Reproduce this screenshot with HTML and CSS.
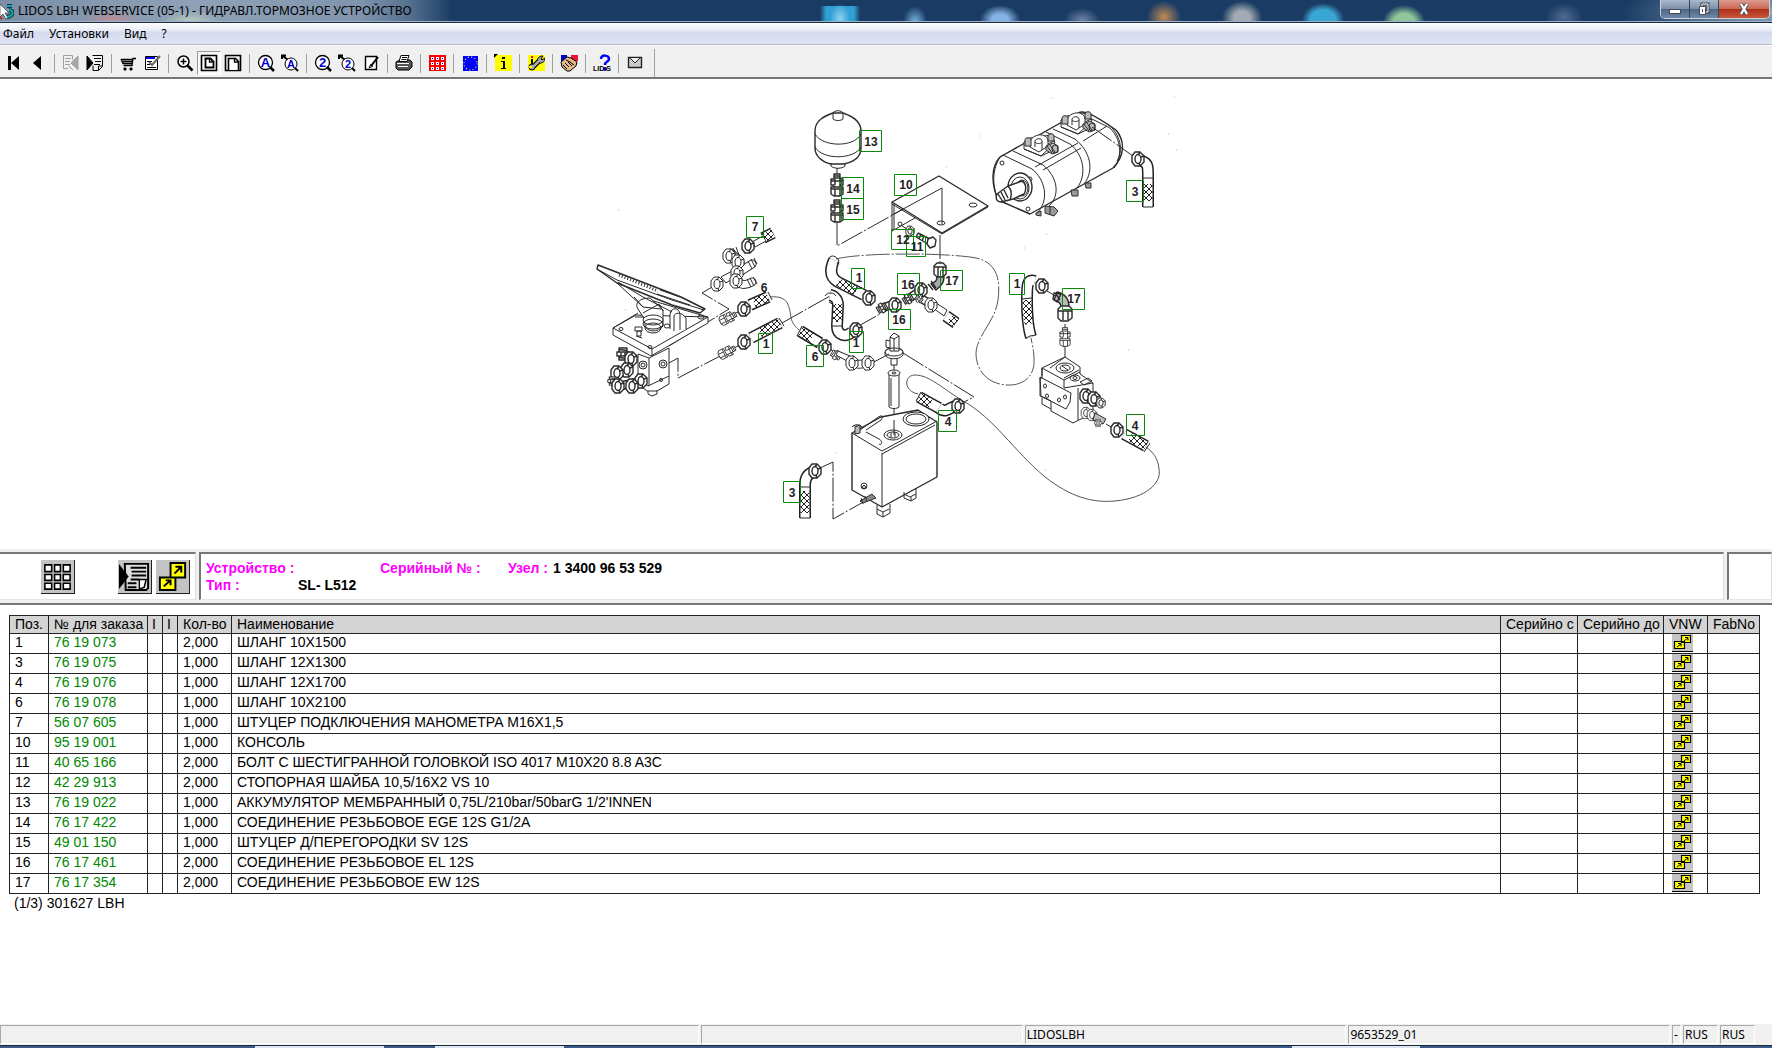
FILE: index.html
```html
<!DOCTYPE html>
<html lang="ru">
<head>
<meta charset="utf-8">
<title>LIDOS LBH WEBSERVICE</title>
<link rel="stylesheet" href="styles.css">
</head>
<body>
<header class="titlebar">
  <svg class="app-icon" width="14" height="20" viewBox="0 0 14 20" aria-hidden="true"><path d="M0 3l9 9-4 0 3 5-2 1-3-5-3 3z" fill="#fff" stroke="#222" stroke-width=".6"/><path d="M7 5h5M9 9c5 0 5 6-2 7" stroke="#083a40" stroke-width="4" fill="none"/><path d="M7 5h5M9 9c5 0 5 6-2 7" stroke="#17a9a9" stroke-width="2" fill="none"/><path d="M0 16l2 2" stroke="#c22" stroke-width="2"/></svg>
  <h1 class="title">LIDOS LBH WEBSERVICE (05-1) - ГИДРАВЛ.ТОРМОЗНОЕ УСТРОЙСТВО</h1>
  <div class="window-buttons">
    <button class="win" aria-label="Свернуть"><svg width="14" height="14"><rect x="1.500" y="7.500" width="11" height="4" fill="#fff" stroke="#444a5a"/></svg></button>
    <button class="win" aria-label="Восстановить"><svg width="14" height="14"><path d="M5 2h6v8H5z" fill="none" stroke="#444a5a" stroke-width="3"/><path d="M5 2h6v8H5z" fill="none" stroke="#fff"/><path d="M2.500 4.500h6v8h-6z" fill="#fff" stroke="#444a5a"/><path d="M5 7h1v3H5z" fill="#444a5a"/></svg></button>
    <button class="win win-close" aria-label="Закрыть"><svg width="14" height="14"><path d="M4 2l6 10M10 2L4 12" stroke="#444a5a" stroke-width="4"/><path d="M4 2l6 10M10 2L4 12" stroke="#fff" stroke-width="2.400"/></svg></button>
  </div>
</header>
<nav class="menubar">
  <button>Файл</button><button>Установки</button><button>Вид</button><button>?</button>
</nav>
<div class="toolbar" role="toolbar">
  <button aria-label="Первая"><svg viewBox="0 0 18 18"><path d="M3 2h3v14H3zM14 2v14L6 9z"/></svg></button>
  <button aria-label="Назад"><svg viewBox="0 0 18 18"><path d="M12 2v14L4 9z"/></svg></button>
  <i class="sep"></i>
  <button aria-label="Предыдущий узел" disabled><svg viewBox="0 0 18 18" fill="none" stroke="#a0a0a0"><path d="M1.500 1.500h9v4M1.500 1.500v13h5M3 4.500h6M3 7.500h5M3 10.500h5M7 12l4 4"/><path d="M16 2v14L9 9z" fill="#a8a8a8"/></svg></button>
  <button aria-label="Следующий узел"><svg viewBox="0 0 18 18" fill="none" stroke="#000"><path d="M6.500 1.500h10v11l-4 4H7v-5"/><path d="M8 4.500h7M9 7.500h6M8 10.500h6M12.500 16v-4h4" /><path d="M1 2v14l6-7z" fill="#000"/></svg></button>
  <i class="sep"></i>
  <button aria-label="Корзина"><svg viewBox="0 0 18 18" fill="none" stroke="#000"><path d="M17 4.500h-3l-1 7H4.500M2 5.500h11.500M2 5l2 4.500h9M4 7.500h9" stroke-width="1.300"/><path d="M5 14h2v2H5zM11 14h2v2h-2z" fill="#000"/></svg></button>
  <button aria-label="Заказ"><svg viewBox="0 0 18 18" fill="none" stroke="#000"><path d="M2.500 2.500h12v13h-12z" fill="#fff"/><path d="M3 4h9" stroke="#00f" stroke-width="2"/><path d="M4 7.500h5M4 10.500h3M4 13.500h9"/><path d="M6 8l3 3 8-9" stroke="#666" stroke-width="2"/></svg></button>
  <i class="sep"></i>
  <button aria-label="Увеличить"><svg viewBox="0 0 18 18" fill="none" stroke="#000"><circle cx="7.500" cy="7.500" r="5.500" fill="#fff" stroke-width="1.500"/><path d="M4.500 7.500h6M7.500 4.500v6" stroke-width="1.500"/><path d="M11.500 11.500l5 5" stroke-width="2.500"/></svg></button>
  <button class="pressed" aria-label="Вся страница"><svg viewBox="0 0 18 18" fill="none" stroke="#000"><path d="M1.500 1.500h15v15h-15z" stroke-width="1.600"/><path d="M5.500 4.500h5l3 3v6h-8z" fill="#fff" stroke-width="1.800"/><path d="M9.500 4v4h4" stroke-width="1.300"/></svg></button>
  <button aria-label="По ширине"><svg viewBox="0 0 18 18" fill="none" stroke="#000"><path d="M1.500 1.500h15v15h-15z" stroke-width="1.600"/><path d="M4.500 16V4.500h7l3 3V16" fill="#fff" stroke-width="1.600"/><path d="M10.500 4v4h4" stroke-width="1.300"/></svg></button>
  <i class="sep"></i>
  <button aria-label="Поиск текста"><svg viewBox="0 0 18 18"><circle cx="8.500" cy="8.500" r="7" fill="#fff" stroke="#000" stroke-width="1.300"/><path d="M13 13l4 4" stroke="#000" stroke-width="2.500"/><text class="glyph" x="8.500" y="13" font-size="13">A</text></svg></button>
  <button aria-label="Поиск текста в узле"><svg viewBox="0 0 18 18"><path d="M1 5V1.500h4M2 2l5 4" fill="none" stroke="#000" stroke-width="2"/><circle cx="10" cy="10" r="6" fill="#fff" stroke="#000"/><path d="M14 14l3 3" stroke="#000" stroke-width="2"/><text class="glyph" x="10" y="14" font-size="11">A</text></svg></button>
  <i class="sep"></i>
  <button aria-label="Поиск номера"><svg viewBox="0 0 18 18"><circle cx="8.500" cy="8.500" r="7" fill="#fff" stroke="#000" stroke-width="1.300"/><path d="M13 13l4 4" stroke="#000" stroke-width="2.500"/><text class="glyph" x="8.500" y="13" font-size="13">2</text></svg></button>
  <button aria-label="Поиск номера в узле"><svg viewBox="0 0 18 18"><path d="M1 5V1.500h4M2 2l5 4" fill="none" stroke="#000" stroke-width="2"/><circle cx="10" cy="10" r="6" fill="#fff" stroke="#000"/><path d="M14 14l3 3" stroke="#000" stroke-width="2"/><text class="glyph" x="10" y="14" font-size="11">2</text></svg></button>
  <button aria-label="Заметка"><svg viewBox="0 0 18 18" fill="none" stroke="#000"><path d="M3.500 2.500h11v13h-11z" fill="#fff" stroke-width="1.400"/><path d="M16 3l-7 9" stroke-width="2"/><path d="M9 10l-2 4 4-2"/></svg></button>
  <i class="sep"></i>
  <button aria-label="Печать"><svg viewBox="0 0 18 18" fill="none" stroke="#000"><path d="M1 8l4-2h10l2 2v5l-3 3H3l-2-2z" fill="#555"/><path d="M6 1.500h8l-2 6H4z" fill="#fff"/><path d="M7 3.500h5M6.500 5.500h5"/><path d="M2 9.500h12M3 12.500h10" stroke="#fff"/></svg></button>
  <i class="sep"></i>
  <button aria-label="Сетка"><svg viewBox="0 0 18 18"><path d="M1 1h17v16H1z" fill="#f00"/><path d="M3 3h3v3H3zM8 3h3v3H8zM13 3h3v3h-3zM3 8h3v3H3zM8 8h3v3H8zM13 8h3v3h-3zM3 13h3v3H3zM8 13h3v3H8zM13 13h3v3h-3z" fill="#fff"/><path d="M4 4h1v1H4zM9 4h1v1H9zM14 4h1v1h-1zM4 9h1v1H4zM9 9h1v1H9zM14 9h1v1h-1zM4 14h1v1H4zM9 14h1v1H9zM14 14h1v1h-1z" fill="#00f"/></svg></button>
  <i class="sep"></i>
  <button aria-label="Европа"><svg viewBox="0 0 18 18"><path d="M2 2h15v15H2z" fill="#00f"/><circle cx="9.500" cy="9.500" r="6.500" fill="none" stroke="#dddb55" stroke-width="1.300" stroke-dasharray="1 2.400"/></svg></button>
  <i class="sep"></i>
  <button aria-label="Информация"><svg viewBox="0 0 18 18"><path d="M1 1h17v16H1z" fill="#ff0"/><path d="M0 0h4L0 4zM8 3h3v2H8zM7 7h4v7h1v1H7v-1h2V8H7z"/></svg></button>
  <i class="sep"></i>
  <button aria-label="Сервис"><svg viewBox="0 0 18 18"><path d="M1 1h17v16H1z" fill="#ff0"/><path d="M4 2h2v2H4z" fill="#f00"/><path d="M4 5h2v6H4z"/><path d="M6 13l7-7" stroke="#000" stroke-width="5"/><circle cx="5" cy="13" r="3" fill="#aaa" stroke="#000"/><path d="M11 7c-1-4 2-5 5-5l-2 3 1 1 3-2c0 4-3 5-5 5z" fill="#aaa" stroke="#000"/><path d="M6 13l7-7" stroke="#aaa" stroke-width="2.500"/><path d="M2 13h3" stroke="#ff0" stroke-width="2"/></svg></button>
  <i class="sep"></i>
  <button aria-label="Партнёры"><svg viewBox="0 0 18 18"><path d="M1 1h6v6H1z" fill="#00c"/><path d="M11 1h7v6h-7z" fill="#f01030"/><path d="M1 8l6-5 4 1 6 4-1 4-6 5H7l-5-4z" fill="#e3b98a" stroke="#000"/><path d="M6 6l4 2 4 3M5 9l4 4M8 8l4 4M3 11l4 4" stroke="#000" fill="none"/></svg></button>
  <i class="sep"></i>
  <button aria-label="О программе"><svg viewBox="0 0 18 18"><text x="0" y="17" font-size="7" font-weight="700" font-family="Liberation Sans, sans-serif">LID S</text><path d="M8 5c0-5 8-4 8 0 0 3-4 2-4 6" fill="none" stroke="#00f" stroke-width="2.500"/><circle cx="12" cy="15" r="2" fill="#008"/></svg></button>
  <i class="sep"></i>
  <button aria-label="Почта"><svg viewBox="0 0 18 18"><path d="M2.500 3.500h13v10h-13z" fill="#ccc" stroke="#222" stroke-width="1.400"/><path d="M4 4l5 5 5-5" fill="#eee" stroke="#222"/></svg></button>
  <i class="sep sep-end"></i>
</div>

<main class="workspace">
  <section class="drawing" aria-label="Чертёж узла">
    <svg class="scheme" width="600" height="460" viewBox="586 85 600 460">
      <defs>
        <pattern id="braid" width="6" height="6" patternUnits="userSpaceOnUse"><path d="M0 0l6 6M6 0L0 6" stroke="#222" stroke-width="1"/></pattern>
        <g id="nut"><path d="M-6-3l3-4h5l4 4v6l-4 4h-5l-3-4z" fill="#fff"/><ellipse rx="3" ry="4.500"/><path d="M2-7l-2 3M6-3l-3 1M2 7l-1-3"/></g>
        <g id="plug"><path d="M-4-6h8v12h-8z" fill="#fff"/><path d="M-6-2h12v4h-12z" fill="#fff"/><path d="M-4-4.500l8 1M-4 3.500l8 1M-2-2v4M2-2v4"/></g>
        <g id="coupling"><path d="M-3-11h6v5h3v6h-3v2h3v7l-3 2h-6l-3-2V2h3V0h-3v-6h3z" fill="#fff"/><path d="M-3-9h6M-3-7h6M-6-4H6M-2-6V0M3-6V0M-6 4H6M-2 4v7M3 4v7M-3 2h6"/></g>
        <g id="port"><path d="M-14 2v-7l6-4 22-3 3 8L3 9z" fill="#fff"/><path d="M-12-5l12 7M0 2l16-8M-14 2L3 9l17-8"/><path d="M-8-4c0-8 15-12 18-3v6L1 5l-9-5z" fill="#fff"/><path d="M-3 0v-6c1-3 7-3 7 0v9M-3-5c1 2 6 2 7 0"/><path d="M-13-7c0-3 6-3 6 0v6h-6zM10-11c0-3 6-3 6 0v5h-6z" fill="#bbb"/><path d="M8-1l7-3 5 3v6l-6 2-6-4z" fill="#bbb"/><ellipse cx="17" cy="2" rx="3" ry="4"/><path d="M9-1l5 7M12-2l5 7"/></g>
      </defs>
      <g class="ink">
        <!-- routing lines -->
        <path class="axis" d="M837 221v25l104-58v36M940 235v28M837 168v6M712 287l-10 6 27 16-60 37M669 363l9-5v20l44-23M782 323l48-27M855 328l25-14M872 363l17-9M903 353l71 44-14 7M1047 291l10 6M1065 324v4M1065 346v20M894 365v8M894 408v28M820 468l13-6v57l34-19M830 349l7 5M829 302l7 4M734 314l8-4M734 348l8-4"/>
        <path class="axis thin" d="M836 259c28-7 115-6 140-1 24 5 24 27 22 42-3 22-21 35-22 53 0 18 12 31 31 32 20 1 28-13 27-25 0-10-2-16-3-22"/>
        <path class="thin" d="M770 297c19-2 19 10 21 20 1 7 5 10 8 13M918 394c-15-3-14-19-3-19 14 0 27 13 48 26 30 16 51 50 82 76 26 20 47 26 70 24 31-3 47-18 44-32-1-11-6-17-13-22"/>
        <!-- brake pedal -->
        <path fill="#fff" d="M613 328l23-13 72 2v6l-57 33-38-21z"/><path d="M613 328l39 21 56-32M652 349v7M638 313l-25 15M650 300l58 17"/>
        <path d="M638 309c-4-6 2-11 12-11l13 12v16c-5 7-16 6-18 0v-6z" fill="#fff"/>
        <ellipse cx="653" cy="320" rx="10" ry="5" fill="#fff"/><ellipse cx="653" cy="324" rx="10" ry="5"/><ellipse cx="653" cy="328" rx="8" ry="5"/><path d="M643 313l16-9 4 7M635 317h9"/>
        <path d="M670 329v-15c1-7 9-7 10 0v16M674 331v-15c1-4 8-4 12 2v12" fill="#fff"/>
        <path class="bold" d="M598 265l83 32 24 12-5 4-28-8-55-22-20-14z" fill="#fff"/><path d="M597 269l20 11 55 20 32 10M617 283l26 24 18 2M618 282l25 15 29 15M634 297l9 10M660 290l20 7M657 294l33 11"/>
        <path d="M619 275l39 16" stroke-width="3" stroke-dasharray="1 2"/>
        <ellipse cx="621" cy="329" rx="2" ry="1.500"/><ellipse cx="701" cy="317" rx="3" ry="2"/><ellipse cx="650" cy="347" rx="2" ry="1.500"/><ellipse cx="667" cy="326" rx="3" ry="2"/>
        <path d="M635 327h7v4h-7zM637 331h4v5h-4zM636 336l6 2"/>
        <path d="M638 354l11 4 20-10v36l-12 7h-10l-9-7z" fill="#fff"/><path d="M649 358v28M638 379l10 7 21-10M648 391v3l4 2 5-2v-4"/>
        <circle cx="643" cy="365" r="4"/><circle cx="643" cy="365" r="2"/><circle cx="663" cy="364" r="4"/><circle cx="663" cy="364" r="2"/><circle cx="661" cy="380" r="1.500"/>
        <g class="bold"><path d="M616 374l12-5M619 386l20-4" stroke-width="9"/><path d="M616 374l12-5M619 386l20-4" stroke="#fff" stroke-width="6"/><use href="#plug" x="623" y="354"/><use href="#nut" x="631" y="359"/><use href="#nut" x="627" y="370"/><use href="#nut" x="617" y="373"/><use href="#plug" transform="translate(612 381) scale(.7)"/><use href="#nut" x="618" y="386"/><use href="#nut" x="641" y="381"/><use href="#nut" x="632" y="386"/></g>
        <!-- tee fittings above pedal -->
        <use href="#nut" x="717" y="284"/><path d="M721 277l13-7 4 5-12 8z" fill="#fff"/>
        <g stroke-linecap="round"><path d="M731 253l9 9-3 19M738 273l14-9M737 281c4 5 10 4 15 1" stroke-width="9"/><path d="M731 253l9 9-3 19M738 273l14-9M737 281c4 5 10 4 15 1" stroke="#fff" stroke-width="7"/></g>
        <path d="M748 261l4 8M751 259l4 8M754 258l3 6M747 279l4 8M750 278l4 8M753 277l4 7M733 248l3 8M736 247l3 8"/>
        <use href="#nut" x="729" y="256"/><use href="#nut" x="738" y="262"/><use href="#nut" x="737" y="273"/><use href="#nut" x="736" y="281"/>
        <use href="#coupling" transform="translate(728 318) rotate(64) scale(.8)"/><use href="#coupling" transform="translate(727 352) rotate(64) scale(.8)"/>
        <!-- hoses: outline, filling and braid over one path -->
        <g class="hose">
          <path d="M750 305l18-8M751 338l29-15M800 331l20 12M763 238l10-5M1148 175v32M1124 434l22 12M919 397l20 11M805 485v33M946 316l10 7"/>
          <path class="fill" d="M750 305l18-8M751 338l29-15M800 331l20 12M763 238l10-5M1148 175v32M1124 434l22 12M919 397l20 11M805 485v33M946 316l10 7"/>
          <path class="braid" d="M754 303l14-6M760 333l20-10M800 331l12 7M763 238l10-5M1148 184v17M1130 437l16 9M919 397l12 7M805 491v22M950 318l6 5"/>
          <path d="M834 260c-5 11-3 18 4 22l26 13M830 295c5 1 8 5 8 10l-1 21c0 9 8 12 15 6M1035 281c-8-2-8 4-8 18 0 17 1 29 4 38M1142 161c6 2 6 6 6 14M813 472c-6 2-8 7-8 13M939 408c8 7 12-3 18-2"/>
          <path class="fill" d="M834 260c-5 11-3 18 4 22l26 13M830 295c5 1 8 5 8 10l-1 21c0 9 8 12 15 6M1035 281c-8-2-8 4-8 18 0 17 1 29 4 38M1142 161c6 2 6 6 6 14M813 472c-6 2-8 7-8 13M939 408c8 7 12-3 18-2"/>
          <path class="braid" d="M838 282l18 9M838 304l-1 18M1027 300c0 10 1 18 2 24"/>
        </g>
        <path d="M829 258c2-3 7-3 10 3l-2 3M825 296c2-4 9-4 11 0M832 326h11M1022 299l10-1M1026 338l4-2 6-1M1143 178h11M1143 207h10M800 487h11M800 518h10M768 292l4 8M779 318l5 8M797 336l5-10M1144 452l6-9M916 401l5-9M857 287l-5 9"/>
        <path d="M752 242l11-6 3 5-11 6zM936 303l11 7-3 6-11-8z" fill="#fff"/>
        <g class="bold"><use href="#nut" x="744" y="309"/><use href="#nut" x="744" y="342"/><use href="#nut" x="748" y="246"/><use href="#nut" x="825" y="347"/><use href="#nut" x="869" y="298"/><use href="#nut" x="856" y="330"/><use href="#nut" x="1042" y="286"/><use href="#nut" x="1138" y="159"/><use href="#nut" x="1117" y="430"/><use href="#nut" x="958" y="406"/><use href="#nut" x="815" y="471"/></g>
        <!-- screw joints of the centre group -->
        <use href="#plug" transform="translate(836 355) rotate(-60) scale(.8)"/><path d="M838 351l12 5-3 5-11-6z" fill="#fff"/><path d="M852 358c5 3 10 3 15 0v8c-5 3-10 3-15 0z" fill="#fff"/><use href="#nut" x="852" y="363"/><use href="#nut" x="868" y="363"/>
        <g class="bold"><path d="M882 308l12-4M908 299l12-8M919 297l8 5" stroke-width="9"/><path d="M882 308l12-4M908 299l12-8M919 297l8 5" stroke="#fff" stroke-width="6"/><use href="#plug" transform="translate(882 308) rotate(60) scale(.8)"/><use href="#nut" x="895" y="305"/><use href="#plug" transform="translate(908 299) rotate(60) scale(.8)"/><use href="#nut" x="921" y="290"/><use href="#plug" transform="translate(919 299) rotate(-50) scale(.6)"/></g><use href="#nut" x="931" y="305"/>
        <g class="bold"><path d="M934 266l3-3h6l3 3v8l-3 3h-6l-3-3z" fill="#fff"/><path d="M934 267h12M938 267v9M943 267v9"/><path d="M937 277h7c0 7-4 9-8 13l-5-6c4-2 6-3 6-7z" fill="#aaa"/><path d="M931 281l5 7M928 284l5 6"/></g>
        <!-- accumulator -->
        <g class="bold"><path d="M815 131c0-11 10-15 18-18h10c9 3 18 8 18 18v17c0 9-8 14-17 16h-13c-9-2-16-8-16-16z" fill="#fff"/></g><path d="M833 119v-6c1-3 9-3 10 0v6c-2 2-8 2-10 0M815 134c7 13 39 14 46 0M815 147c7 13 39 13 46 0M831 163v3c3 3 11 3 14 0v-3"/>
        <g class="bold"><use href="#coupling" x="837" y="185"/><use href="#coupling" x="837" y="211"/></g>
        <!-- bracket with bolt -->
        <path d="M892 202v29l23-13M894 204v25"/><path class="bold" d="M892 202l47-26 49 30-46 27z" fill="#fff"/><path d="M892 204l50 30 46-27M942 224v-36l-50 27"/><ellipse cx="973" cy="205" rx="4" ry="2"/><ellipse cx="941" cy="223" rx="4" ry="2"/><ellipse cx="900" cy="224" rx="2" ry="2"/><path d="M902 226l5 3"/>
        <g class="bold"><use href="#nut" transform="translate(910 231) scale(.7)"/><path d="M918 233l12 6M916 237l12 7M918 233l-2 4M921 234l-2 5M924 236l-2 5"/><path d="M928 239l5-2 3 3-1 6-5 2-3-4z" fill="#fff"/></g>
        <!-- tandem pump -->
        <g class="bold"><path d="M1000 157l78-44c5-3 12-1 38 17 10 12 8 27-3 38l-83 46-32-14c-7-17-7-33 2-43z" fill="#fff"/></g>
        <path d="M1003 155l29 14c13 10 18 31 5 44M1013 151l30 14c14 11 18 30 6 41M1046 132l24 12c14 11 17 31 7 44M1053 129l22 10c15 12 20 31 9 45M1090 118l20 10c11 11 13 28 4 40M1108 124c12 10 16 26 9 37M1035 167l43-24M1043 170l38-22M1083 141l24-15M1000 157c-9 15-7 30-2 43M1003 155l-3 2"/>
        <use href="#port" x="1038" y="147"/><use href="#port" x="1075" y="125"/>
        <path class="axis" d="M1092 127l41 29"/>
        <circle cx="1002" cy="163" r="2"/><circle cx="1030" cy="179" r="2"/><circle cx="1028" cy="209" r="2"/>
        <g class="bold"><ellipse cx="1020" cy="187" rx="12" ry="14" fill="#fff"/></g><ellipse cx="1020" cy="188" rx="9" ry="11"/><ellipse cx="1022" cy="188" rx="6" ry="8"/>
        <g class="bold"><path d="M1022 181l-14 5-11 8c-2 5 0 8 4 8l12-3 11-5c3-5 2-11-2-13z" fill="#fff"/><path d="M1008 186c4 4 4 9 2 14M998 194l5 8M1001 192l4 8M1004 190l4 8"/></g>
        <path d="M1036 213l5-2v5l-5-1zM1045 206l9 1 4 4-4 5-9-3zM1050 207v7M1071 190h7v6h-6zM1085 183h6v5h-5z" fill="#999"/>
        <!-- elbow and nipple over the valve block -->
        <g class="bold"><path d="M1057 292c9 2 12 8 12 15h-8c0-4-3-6-7-7z" fill="#bbb"/><path d="M1054 293l-1 6 4 3 4-8zM1056 294l4 6"/><path d="M1058 309l3-3h8l3 3v9l-4 3h-7l-3-3z" fill="#fff"/><path d="M1058 311h14M1063 311v9M1068 311v9"/></g>
        <use href="#coupling" transform="translate(1065 337) scale(.85)"/>
        <!-- valve block -->
        <path d="M1042 368l23-11 15 10v7l13 9v30l-20 10-22-12v-10l-11-5v-18h2z" fill="#fff"/><path d="M1042 368l22 12 16-8M1064 380v8l29-5M1064 378l15-8M1078 388v32M1042 368v8M1040 377l31 16-1 9-4 7-25-13zM1042 398v6l9 5M1065 357l-15 11"/>
        <ellipse cx="1065" cy="368" rx="9" ry="5"/><ellipse cx="1065" cy="368" rx="5" ry="3"/><path d="M1062 366l6 4"/><ellipse cx="1075" cy="378" rx="5" ry="3"/><ellipse cx="1075" cy="378" rx="2" ry="1.500"/><path d="M1080 382l8-4 4 3-8 4z"/>
        <ellipse cx="1045" cy="386" rx="1.500" ry="2"/><ellipse cx="1059" cy="400" rx="1.500" ry="2"/><ellipse cx="1047" cy="396" rx="1.500" ry="2"/><ellipse cx="1065" cy="397" rx="1.500" ry="2"/>
        <g class="bold"><use href="#nut" x="1086" y="396"/><use href="#nut" x="1094" y="399"/><use href="#nut" transform="translate(1101 403) scale(.7)"/></g><use href="#nut" transform="translate(1086 413) scale(.8)"/><use href="#nut" transform="translate(1092 415) scale(.8)"/><path d="M1095 413l11 6-3 5-10-4z" fill="#bbb"/><use href="#plug" transform="translate(1098 423) scale(.6)"/><path d="M1106 424l5 3"/>
        <!-- filter -->
        <path d="M890 337l4-4 5 3v15h-9z" fill="#fff"/><path d="M894 339v12M890 337l4 2 5-3M890 341l-4-1v7l4 1"/><path d="M885 351l4-3M899 348l4 3"/><ellipse cx="894" cy="352" rx="9" ry="4"/><path d="M885 352v3c3 5 15 5 18 0v-3M891 358v7h6v-7"/>
        <path d="M889 374v33c2 2 8 2 10 0v-33" fill="#fff"/><ellipse cx="894" cy="373" rx="6" ry="3" fill="#fff"/><ellipse cx="894" cy="373" rx="2" ry="1"/><path d="M891 378v28"/>
        <!-- tank -->
        <path class="bold" d="M852 433l29-16 37-7 19 12v55l-55 30-30-17z" fill="#fff"/><path d="M852 433l30 18 55-30M882 453v54M882 454l53-29M860 430l17-12c5-4 7-2 4 2l-15 10M866 432l13 7c4 2 3 7 0 5"/>
        <path d="M855 427l5-2v8l-5 1zM852 427c2-3 8-3 10 0" fill="#bbb"/>
        <ellipse cx="893" cy="435" rx="9" ry="5" fill="#fff"/><ellipse cx="893" cy="435" rx="6" ry="3"/><path d="M891 433v5M895 432v5M894 420v15"/><ellipse cx="916" cy="419" rx="13" ry="7" fill="#fff"/><ellipse cx="916" cy="419" rx="10" ry="5"/>
        <circle cx="864" cy="486" r="3"/><circle cx="864" cy="487" r="1.500"/>
        <path d="M860 501l12-7 4 4-13 5zM863 504l-2-6M867 501l-2-5" fill="#888"/><path d="M877 505v9l6 3 7-4v-9M877 509l6 3 6-3M883 512v5M904 492v6l7 3 5-3v-10M904 494l6 3 6-3M911 497v4"/>
      </g>
      <g class="specks"><path d="M618 210h1M625 310h1M1052 98h1M1174 97h1M1168 134h1M1046 234h1M1024 248h1M946 167h1M979 136h1M1045 470h1M836 453h1M1128 350h1M1176 150h1"/></g>
      <g class="tags">
        <path d="M859.500 130.500h22v21h-22zM841.500 177.500h22v21h-22zM841.500 198.500h22v21h-22zM894.500 174.500h22v21h-22zM891.500 229.500h22v20h-22zM906.500 236.500h19v20h-19zM851.500 268.500h13v20h-13zM897.500 273.500h22v21h-22zM940.500 270.500h22v20h-22zM1009.500 273.500h15v21h-15zM1062.500 288.500h22v21h-22zM1126.500 180.500h17v21h-17zM746.500 216.500h17v21h-17zM758.500 333.500h14v20h-14zM806.500 345.500h17v21h-17zM849.500 331.500h14v21h-14zM888.500 309.500h22v20h-22zM938.500 410.500h18v21h-18zM783.500 481.500h17v21h-17zM1126.500 414.500h18v21h-18z"/>
        <text x="871" y="146">13</text><text x="853" y="193">14</text><text x="853" y="214">15</text><text x="906" y="189">10</text><text x="903" y="244">12</text><text x="917" y="251">11</text><text x="859" y="282">1</text><text x="908" y="289">16</text><text x="952" y="285">17</text><text x="1017" y="288">1</text><text x="1074" y="303">17</text><text x="1135" y="196">3</text><text x="755" y="231">7</text><text x="766" y="348">1</text><text x="815" y="361">6</text><text x="856" y="347">1</text><text x="899" y="324">16</text><text x="948" y="426">4</text><text x="792" y="497">3</text><text x="1135" y="430">4</text><text x="764" y="292">6</text>
      </g>
    </svg>
  </section>

  <section class="infobar">
    <div class="pane pane-tools">
      <button class="tile" aria-label="Сетка узлов"><svg width="33" height="33" viewBox="0 0 34 34"><g fill="#fff" stroke="#000" stroke-width="1.600"><path d="M4 5h7v7H4zM14 5h6v7h-6zM23 5h7v7h-7zM4 15h7v6H4zM14 15h6v6h-6zM23 15h7v6h-7zM4 24h7v6H4zM14 24h6v6h-6zM23 24h7v6h-7z"/></g></svg></button>
      <button class="tile tile-list" aria-label="Список"><svg width="33" height="33" viewBox="0 0 34 34"><path d="M7 4h24v25l-2 2H8z" fill="#ddd" stroke="#000" stroke-width="2"/><path d="M1 4l10 13L1 30z"/><path d="M13 8h16M14 12h15M14 16h15M13 20h9M10 24h9M10 28h9" stroke="#000" stroke-width="2"/><path d="M22 20h7l-2 8-5 2z" fill="#fff" stroke="#000" stroke-width="1.500"/></svg></button>
      <button class="tile" aria-label="Связи"><svg width="33" height="33" viewBox="0 0 34 34"><g fill="#ff0" stroke="#000" stroke-width="2"><path d="M15 3h15v15H15zM4 18h16v13H4z"/></g><path d="M19 14l7-7M20 7h6v6M8 27l7-6M10 21h5v5" fill="none" stroke="#000" stroke-width="2"/></svg></button>
    </div>
    <dl class="pane facts">
      <div><dt>Устройство :</dt><dd></dd></div>
      <div><dt>Серийный № :</dt><dd></dd></div>
      <div><dt>Узел :</dt><dd>1 3400 96 53 529</dd></div>
      <div class="fact-type"><dt>Тип :</dt><dd>SL- L512</dd></div>
    </dl>
    <div class="pane"></div>
  </section>

  <section class="parts">
    <svg width="0" height="0" class="defs" aria-hidden="true"><symbol id="link" viewBox="0 0 21 18"><path d="M0 0h21v18H0z" fill="#c4c4c4"/><path d="M0 17h21v1H0z"/><path d="M9.500 1.500h9v7h-9zM2.500 7.500h10v7h-10z" fill="#ff0" stroke="#000" stroke-width="1.200"/><path d="M12 7l4-3M13 3.500h3v3M5 13l4-3M6 9.500h3v3" fill="none" stroke="#000"/></symbol></svg>
    <table>
      <colgroup><col class="c-pos"><col class="c-order"><col class="c-mark"><col class="c-mark"><col class="c-qty"><col><col class="c-from"><col class="c-to"><col class="c-vnw"><col class="c-fab"></colgroup>
      <thead><tr><th>Поз.</th><th>№ для заказа</th><th>I</th><th>I</th><th>Кол-во</th><th>Наименование</th><th>Серийно с</th><th>Серийно до</th><th>VNW</th><th>FabNo</th></tr></thead>
      <tbody>
        <tr><td>1</td><td><a href="#">76 19 073</a></td><td></td><td></td><td>2,000</td><td>ШЛАНГ 10X1500</td><td></td><td></td><td><button class="link" aria-label="VNW"><svg width="21" height="18"><use href="#link"/></svg></button></td><td></td></tr>
        <tr><td>3</td><td><a href="#">76 19 075</a></td><td></td><td></td><td>1,000</td><td>ШЛАНГ 12X1300</td><td></td><td></td><td><button class="link" aria-label="VNW"><svg width="21" height="18"><use href="#link"/></svg></button></td><td></td></tr>
        <tr><td>4</td><td><a href="#">76 19 076</a></td><td></td><td></td><td>1,000</td><td>ШЛАНГ 12X1700</td><td></td><td></td><td><button class="link" aria-label="VNW"><svg width="21" height="18"><use href="#link"/></svg></button></td><td></td></tr>
        <tr><td>6</td><td><a href="#">76 19 078</a></td><td></td><td></td><td>1,000</td><td>ШЛАНГ 10X2100</td><td></td><td></td><td><button class="link" aria-label="VNW"><svg width="21" height="18"><use href="#link"/></svg></button></td><td></td></tr>
        <tr><td>7</td><td><a href="#">56 07 605</a></td><td></td><td></td><td>1,000</td><td>ШТУЦЕР ПОДКЛЮЧЕНИЯ МАНОМЕТРА M16X1,5</td><td></td><td></td><td><button class="link" aria-label="VNW"><svg width="21" height="18"><use href="#link"/></svg></button></td><td></td></tr>
        <tr><td>10</td><td><a href="#">95 19 001</a></td><td></td><td></td><td>1,000</td><td>КОНСОЛЬ</td><td></td><td></td><td><button class="link" aria-label="VNW"><svg width="21" height="18"><use href="#link"/></svg></button></td><td></td></tr>
        <tr><td>11</td><td><a href="#">40 65 166</a></td><td></td><td></td><td>2,000</td><td>БОЛТ С ШЕСТИГРАННОЙ ГОЛОВКОЙ ISO 4017 M10X20 8.8 A3C</td><td></td><td></td><td><button class="link" aria-label="VNW"><svg width="21" height="18"><use href="#link"/></svg></button></td><td></td></tr>
        <tr><td>12</td><td><a href="#">42 29 913</a></td><td></td><td></td><td>2,000</td><td>СТОПОРНАЯ ШАЙБА 10,5/16X2 VS 10</td><td></td><td></td><td><button class="link" aria-label="VNW"><svg width="21" height="18"><use href="#link"/></svg></button></td><td></td></tr>
        <tr><td>13</td><td><a href="#">76 19 022</a></td><td></td><td></td><td>1,000</td><td>АККУМУЛЯТОР МЕМБРАННЫЙ 0,75L/210bar/50barG 1/2'INNEN</td><td></td><td></td><td><button class="link" aria-label="VNW"><svg width="21" height="18"><use href="#link"/></svg></button></td><td></td></tr>
        <tr><td>14</td><td><a href="#">76 17 422</a></td><td></td><td></td><td>1,000</td><td>СОЕДИНЕНИЕ РЕЗЬБОВОЕ EGE 12S G1/2A</td><td></td><td></td><td><button class="link" aria-label="VNW"><svg width="21" height="18"><use href="#link"/></svg></button></td><td></td></tr>
        <tr><td>15</td><td><a href="#">49 01 150</a></td><td></td><td></td><td>1,000</td><td>ШТУЦЕР Д/ПЕРЕГОРОДКИ SV 12S</td><td></td><td></td><td><button class="link" aria-label="VNW"><svg width="21" height="18"><use href="#link"/></svg></button></td><td></td></tr>
        <tr><td>16</td><td><a href="#">76 17 461</a></td><td></td><td></td><td>2,000</td><td>СОЕДИНЕНИЕ РЕЗЬБОВОЕ EL 12S</td><td></td><td></td><td><button class="link" aria-label="VNW"><svg width="21" height="18"><use href="#link"/></svg></button></td><td></td></tr>
        <tr><td>17</td><td><a href="#">76 17 354</a></td><td></td><td></td><td>2,000</td><td>СОЕДИНЕНИЕ РЕЗЬБОВОЕ EW 12S</td><td></td><td></td><td><button class="link" aria-label="VNW"><svg width="21" height="18"><use href="#link"/></svg></button></td><td></td></tr>
      </tbody>
    </table>
    <p class="page-note">(1/3) 301627 LBH</p>
  </section>
</main>

<footer class="statusbar">
  <span></span><span></span><span>LIDOSLBH</span><span>9653529_01</span><span>-</span><span>RUS</span><span>RUS</span>
</footer>
<div class="taskbar"></div>
</body>
</html>
```
FILE: styles.css
```css
* { box-sizing: border-box; }
html, body { height: 100%; }
body {
  margin: 0;
  display: flex;
  flex-direction: column;
  background: #fff;
  color: #000;
  font: 14px/18px "Liberation Sans", Arial, sans-serif;
  overflow: hidden;
}
button { font: inherit; color: inherit; border: 0; padding: 0; background: none; }
svg { display: block; }

.titlebar {
  flex: none;
  display: flex;
  align-items: center;
  height: 23px;
  border-bottom: 1px solid #1b2c42;
  box-shadow: inset 0 -1px #9db2c8;
  background:
    radial-gradient(ellipse 10px 14px at 840px 18px, #8fd0f2, transparent),
    linear-gradient(90deg, transparent 820px, #2f9fd4 826px 854px, transparent 860px) 0 6px no-repeat,
    radial-gradient(ellipse 12px 16px at 915px 22px, #79b4e0, transparent),
    radial-gradient(ellipse 20px 15px at 1000px 20px, #86b2e4 40%, transparent),
    radial-gradient(ellipse 18px 12px at 1082px 20px, #6d84a4, transparent),
    radial-gradient(ellipse 17px 16px at 1164px 17px, #c08a55, transparent),
    radial-gradient(ellipse 20px 17px at 1242px 18px, #a4aab4 40%, transparent),
    radial-gradient(ellipse 21px 17px at 1323px 20px, #3aa6d4 60%, transparent),
    radial-gradient(ellipse 21px 17px at 1404px 22px, #8fc79a 50%, transparent),
    radial-gradient(ellipse 18px 14px at 1564px 17px, #506b92, transparent),
    radial-gradient(ellipse 30px 12px at 112px 22px, #c58d96, transparent),
    radial-gradient(ellipse 30px 12px at 190px 22px, #b9cbbf, transparent),
    radial-gradient(ellipse 150px 40px at 100% 60%, #8ea4bd, transparent),
    linear-gradient(90deg, #7b90a8, #8ea1b6 200px, #8095ad 360px, #55708f 410px, #1a3c64 452px);
}
.app-icon { margin-right: 4px; }
.title { flex: 1; margin: 0; font: 12px/20px "Noto Sans", sans-serif; white-space: nowrap; }
.window-buttons { display: flex; align-self: flex-start; margin-right: 2px; border: 1px solid #c9d3e0; border-top: 0; border-radius: 0 0 5px 5px; overflow: hidden; }
.win { width: 29px; height: 18px; display: grid; place-items: center; background: linear-gradient(#a9b8ca, #7e91aa 48%, #4d6483 50%, #7089a8); border-right: 1px solid #33475f; }
.win-close { width: 50px; border-right: 0; background: linear-gradient(#dc9a8c, #c96a58 48%, #ad2d18 50%, #c9583a); }

.menubar { flex: none; display: flex; gap: 15px; height: 22px; padding-left: 3px; background: linear-gradient(#fff, #e6eaf6 38%, #d5dbee 42%, #dfe4f4); border-bottom: 1px solid #b4b8c4; font: 12px/21px "Noto Sans", sans-serif; }

.toolbar { flex: none; display: flex; align-items: center; height: 34px; padding: 3px 2px 0; background: #f0f0f0; border-top: 1px solid #fff; border-bottom: 2px solid #777; }
.toolbar button { flex: none; width: 24px; height: 24px; display: grid; place-items: center; }
.toolbar button svg { width: 18px; height: 18px; }
.toolbar .pressed { border: 1px solid #999; border-right-color: #fff; border-bottom-color: #fff; background: #f8f8f8; }
.sep { flex: none; width: 1px; height: 19px; margin: 0 4px; background: #a0a0a0; }
.sep-end { height: 28px; margin-left: 7px; }
.glyph { font-family: "Liberation Sans", Arial, sans-serif; font-weight: 700; fill: #00c; text-anchor: middle; }

.workspace { flex: 1; min-height: 0; display: flex; flex-direction: column; }
.drawing { flex: none; display: flex; justify-content: center; padding: 6px 0 4px; border-bottom: 3px solid #f0f0f0; }
.ink { fill: none; stroke: #2a2a2a; stroke-width: 1; stroke-linejoin: round; }
.bold { stroke-width: 1.4; }
.axis { stroke-dasharray: 24 2 2 2; }
.thin { stroke: #555; }
.hose path { stroke: #222; stroke-width: 12; }
.hose .fill { stroke: #fff; stroke-width: 9; }
.hose .braid { stroke: url(#braid); stroke-width: 9; }
.specks { stroke: #bbb; }
.tags path { fill: none; stroke: #0a8a0a; }
.tags text { font: 700 12px "Liberation Sans", Arial, sans-serif; text-anchor: middle; fill: #222; }

.infobar { flex: none; display: grid; grid-template-columns: 196px 1fr 45px; gap: 3px; padding-bottom: 3px; background: #f0f0f0; border-bottom: 2px solid #777; }
.pane { height: 48px; margin: 0; background: #fff; border: 2px solid #777; border-right: 1px solid #ddd; border-bottom: 1px solid #e4e4e4; }
.pane-tools { display: flex; align-items: center; gap: 4px; padding-left: 41px; border-left: 0; }
.tile { flex: none; background: #c3c3c3; border-right: 1px solid #222; border-bottom: 1px solid #222; }
.tile-list { margin-left: 39px; }
.facts { display: grid; grid-template-columns: 174px 128px 1fr; align-content: start; padding: 6px 5px 0; font-weight: 700; line-height: 17px; white-space: nowrap; }
.facts div { display: flex; gap: 5px; }
.facts dt { color: #f0f; }
.facts dd { margin: 0; }
.facts .fact-type { grid-column: 1 / -1; }
.facts .fact-type dt { width: 87px; }

.parts { padding: 10px 12px 0 9px; }
.defs { position: absolute; }
table { width: 100%; table-layout: fixed; border-collapse: collapse; }
th, td { height: 20px; padding: 0 5px; border: 1px solid #222; text-align: left; vertical-align: top; font-weight: 400; line-height: 16px; white-space: nowrap; }
th { background: #d4d4d4; height: 18px; line-height: 17px; }
td:nth-child(9) { padding: 0 8px; }
th:nth-child(3), th:nth-child(4) { padding: 0 4px; }
.c-pos { width: 39px; } .c-order { width: 99px; } .c-mark { width: 15px; } .c-qty { width: 54px; }
.c-from { width: 77px; } .c-to { width: 86px; } .c-vnw { width: 44px; } .c-fab { width: 52px; }
td a { color: #080; text-decoration: none; }
.link { display: block; }
.page-note { margin: 0 0 0 5px; }

.statusbar { flex: none; display: grid; grid-template-columns: 700fr 322fr 322fr 322fr 9px 35px 35px; gap: 2px; height: 21px; padding: 1px 17px 1px 0; background: #f0f0f0; font: 12px/18px "Noto Sans", sans-serif; }
.statusbar span { padding-left: 1px; border: 1px solid #a8a8a8; border-right-color: #fff; border-bottom-color: #fff; overflow: hidden; }
.taskbar { flex: none; height: 3px; background: linear-gradient(90deg, transparent 255px, #dfe5ee 255px 384px, transparent 384px 435px, #dfe5ee 435px 564px, transparent 564px 1292px, #dfe5ee 1292px 1420px, transparent 1420px), #3a5a88; border-top: 1px solid #1b2c42; }
```
